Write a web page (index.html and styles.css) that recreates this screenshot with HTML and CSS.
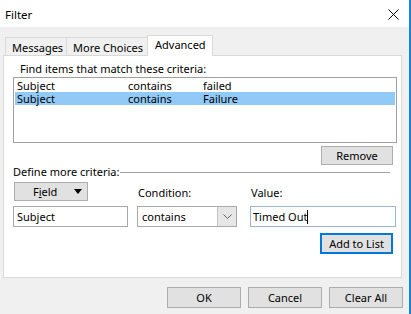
FILE: index.html
```html
<!DOCTYPE html>
<html lang="en">
  <head>
    <meta charset="UTF-8" />
    <title>Filter</title>
    <link rel="stylesheet" href="styles.css">
  </head>
  <body>
    <div class="window">
      <!-- TITLE BAR -->
      <div class="titlebar">
        <span class="title">Filter</span>
        <svg class="close" width="11" height="11" viewBox="0 0 11 11" fill="none" stroke="#000" stroke-width="1">
          <line x1="0.5" y1="0.5" x2="10.5" y2="10.5"/>
          <line x1="10.5" y1="0.5" x2="0.5" y2="10.5"/>
        </svg>
      </div>

      <!-- TABS -->
      <div class="tabs">
        <div class="tab tab-messages">Messages</div>
        <div class="tab tab-more">More Choices</div>
        <div class="tab tab-advanced active">Advanced</div>
      </div>

      <!-- TAB PAGE -->
      <div class="panel">
        <div class="list-label">Find items that match these criteria:</div>
        <div class="listbox">
          <div class="list-row">
            <span>Subject</span><span>contains</span><span>failed</span>
          </div>
          <div class="list-row selected">
            <span>Subject</span><span>contains</span><span>Failure</span>
          </div>
        </div>
        <div class="remove-row">
          <button class="btn btn-remove">Remove</button>
        </div>

        <div class="group-title">
          <span>Define more criteria:</span>
          <span class="group-line"></span>
        </div>

        <div class="criteria">
          <button class="btn btn-field"><span class="field-text">F<u>i</u>eld</span><span class="tri"></span></button>
          <label class="crit-label">Condition:</label>
          <label class="crit-label">Value:</label>

          <div class="input input-field">Subject</div>
          <div class="input select">
            <span class="select-text">contains</span>
            <span class="select-arrow">
              <svg width="9" height="5" viewBox="0 0 9 5" fill="none" stroke="#606060" stroke-width="1">
                <path d="M0.5 0.5l4 4 4-4"/>
              </svg>
            </span>
          </div>
          <div class="input input-value">Timed Out<span class="caret"></span></div>
        </div>

        <div class="add-row">
          <button class="btn btn-default">Add to List</button>
        </div>
      </div>

      <!-- DIALOG BUTTONS -->
      <div class="footer">
        <button class="btn btn-dialog">OK</button>
        <button class="btn btn-dialog">Cancel</button>
        <button class="btn btn-dialog">Clear All</button>
      </div>
    </div>
  </body>
</html>
```

FILE: styles.css
```css
/* RESET */
* {
  margin: 0;
  padding: 0;
  box-sizing: border-box;
}

body {
  font-family: "Noto Sans", "Open Sans", sans-serif;
  font-size: 11px;
  color: #000;
  background: #f0f0f0;
  width: 411px;
  height: 314px;
  overflow: hidden;
}

/* WINDOW FRAME */
.window {
  display: flex;
  flex-direction: column;
  height: 314px;
  background: #f0f0f0;
  border-right: 2px solid #1883d7;
}

.titlebar {
  height: 27px;
  background: #fff;
  display: flex;
  align-items: center;
  justify-content: space-between;
  padding: 0 10px 0 5px;
}
.title {
  font-size: 11.5px;
  line-height: 15px;
  margin-top: 1px;
}
.close {
  margin-top: 1px;
}

/* TABS */
.tabs {
  display: flex;
  align-items: flex-end;
  margin-top: 8px;
  padding-left: 5px;
  height: 20px;
}
.tab {
  height: 18px;
  line-height: 15px;
  border: 1px solid #d9d9d9;
  border-bottom: none;
  background: #f0f0f0;
  padding: 2px 6px 0;
  white-space: nowrap;
}
.tab-messages {
  width: 62px;
}
.tab-more {
  width: 82px;
  margin-left: -1px;
}
.tab-advanced {
  width: 66px;
  margin-left: -1px;
}
.tab.active {
  height: 21px;
  margin-bottom: -1px;
  background: #fff;
  padding: 1px 7px 0;
  position: relative;
  z-index: 1;
}

/* TAB PAGE */
.panel {
  margin: 0 7px 0 3px;
  height: 223px;
  background: #fff;
  border: 1px solid #d9d9d9;
  padding: 5px 8px 0 9px;
  display: flex;
  flex-direction: column;
}
.list-label {
  line-height: 15px;
  padding-left: 7px;
}

.listbox {
  margin-top: 1px;
  width: 384px;
  height: 66px;
  border: 1px solid #a0a0a0;
  padding: 1px;
}
.list-row {
  display: grid;
  grid-template-columns: 111px 75px 1fr;
  height: 13px;
  line-height: 13px;
  padding-left: 2px;
}
.list-row.selected {
  background: #91c9f7;
}

.remove-row {
  display: flex;
  justify-content: flex-end;
  margin-top: 3px;
}

/* BUTTONS */
.btn {
  font-family: inherit;
  font-size: 11px;
  color: #000;
  background: #e1e1e1;
  border: 1px solid #adadad;
  line-height: 15px;
}
.btn-remove {
  width: 72px;
  height: 19px;
}
.btn-default {
  width: 73px;
  height: 21px;
  border: 2px solid #0078d7;
}
.btn-dialog {
  width: 74px;
  height: 21px;
}

/* CRITERIA GROUP */
.group-title {
  display: flex;
  align-items: center;
  margin-top: -1px;
  line-height: 15px;
  margin-right: 3px;
}
.group-line {
  flex: 1;
  height: 1px;
  background: #a0a0a0;
  margin-left: 1px;
  margin-top: 1px;
}

.criteria {
  display: grid;
  grid-template-columns: 124px 113px 146px;
  grid-template-rows: 20px 21px;
  row-gap: 4px;
  margin-top: 3px;
}
.btn-field {
  width: 74px;
  height: 19px;
  margin-left: 1px;
  display: flex;
  align-items: center;
  padding-left: 18px;
}
.field-text {
  width: 41px;
  text-align: left;
}
.tri {
  width: 0;
  height: 0;
  border-left: 4px solid transparent;
  border-right: 4px solid transparent;
  border-top: 5px solid #000;
}
.crit-label {
  align-self: end;
  line-height: 15px;
  padding-left: 1px;
  margin-bottom: 2px;
}

.input {
  height: 21px;
  border: 1px solid #a9a9a9;
  background: #fff;
  line-height: 18px;
  padding-left: 3px;
  display: flex;
  align-items: center;
}
.input-field {
  width: 115px;
}
.select {
  width: 100px;
  padding-left: 4px;
  border-color: #a9a9a9;
}
.select-text {
  flex: 1;
}
.select-arrow {
  width: 19px;
  height: 19px;
  background: #e6e6e6;
  border-left: 1px solid #c4c4c4;
  display: flex;
  align-items: center;
  justify-content: center;
}
.input-value {
  width: 146px;
  border-color: #9db4d1;
  padding-left: 2px;
}
.caret {
  width: 1px;
  height: 14px;
  background: #000;
}

.add-row {
  display: flex;
  justify-content: flex-end;
  margin-top: 6px;
}

/* DIALOG FOOTER */
.footer {
  display: flex;
  justify-content: flex-end;
  gap: 7px;
  margin-top: 9px;
  padding-right: 6px;
}
```
